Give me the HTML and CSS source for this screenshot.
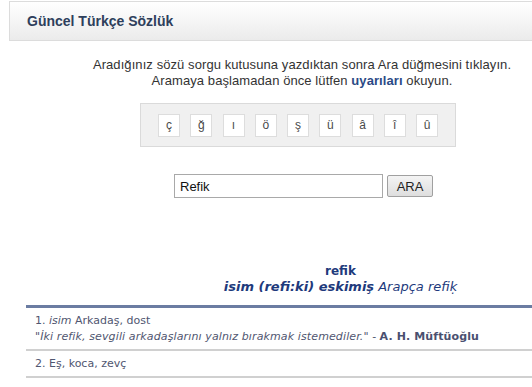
FILE: index.html
```html
<!DOCTYPE html>
<html lang="tr">
<head>
<meta charset="utf-8">
<title>Güncel Türkçe Sözlük</title>
<link rel="stylesheet" href="styles.css">
</head>
<body>
<div class="header"><h1 class="title">Güncel Türkçe Sözlük</h1></div>
<div class="main">
  <p class="intro">Aradığınız sözü sorgu kutusuna yazdıktan sonra Ara düğmesini tıklayın.<br>Aramaya başlamadan önce lütfen <a class="warn" href="#">uyarıları</a> okuyun.</p>
  <div class="chars">
    <span class="ch">ç</span><span class="ch">ğ</span><span class="ch">ı</span><span class="ch">ö</span><span class="ch">ş</span><span class="ch">ü</span><span class="ch">â</span><span class="ch">î</span><span class="ch">û</span>
  </div>
  <form class="search">
    <input class="query" type="text" value="Refik">
    <button class="go" type="button">ARA</button>
  </form>
  <div class="entry">
    <div class="word">refik</div>
    <div class="meta"><b>isim (refi:ki) eskimiş</b> Arapça refiḳ</div>
  </div>
  <div class="defs">
    <div class="def">1. <i>isim</i> Arkadaş, dost<br><i class="quote">"İki refik, sevgili arkadaşlarını yalnız bırakmak istemediler."</i> - <b class="author">A. H. Müftüoğlu</b></div>
    <div class="def">2. Eş, koca, zevç</div>
  </div>
</div>
</body>
</html>
```

FILE: styles.css
```css
html, body { margin: 0; padding: 0; background: #fff; }
body { overflow: hidden; font-family: "Liberation Sans", Arial, sans-serif; }

.header {
  margin: 1px 0 0 9px;
  height: 38px;
  border: 1px solid #dcdcdc;
  border-right: none;
  background: linear-gradient(#ffffff, #ebebeb);
  display: flex;
  align-items: center;
}
.title {
  margin: 0 0 0 17px;
  font-size: 14px;
  font-weight: bold;
  color: #2e3f5c;
}

.main { margin-left: 26px; }

.intro {
  margin: 16px 0 0;
  padding-left: 46px;
  text-align: center;
  font-size: 13px;
  line-height: 16px;
  letter-spacing: 0.08px;
  color: #333;
}
.warn { color: #2b4a86; font-weight: bold; text-decoration: none; }

.chars {
  margin: 14px 0 0 114px;
  width: 280px;
  padding: 10px 17px 9px;
  background: #f0f0f0;
  border: 1px solid #dadada;
  display: flex;
  justify-content: space-between;
}
.ch {
  width: 20px;
  height: 21px;
  border: 1px solid #dddddd;
  background: #fff;
  font-size: 12px;
  line-height: 21px;
  text-align: center;
  color: #4a4a4a;
}

.search {
  margin: 27px 0 0 148px;
  display: flex;
  align-items: center;
  gap: 4px;
}
.query {
  box-sizing: border-box;
  width: 209px;
  height: 24px;
  margin: 0;
  padding: 0 5px;
  border: 1px solid #a9a9a9;
  font-family: "Liberation Sans", Arial, sans-serif;
  font-size: 13px;
  color: #111;
}
.go {
  box-sizing: border-box;
  width: 46px;
  height: 22px;
  margin: 0;
  padding: 0;
  border: 1px solid #a0a0a0;
  border-radius: 2px;
  background: linear-gradient(#f4f4f4, #dedede);
  font-family: "Liberation Sans", Arial, sans-serif;
  font-size: 13px;
  color: #222;
}

.entry {
  margin: 65px 0 0 0;
  padding-left: 123px;
  text-align: center;
  font-family: "DejaVu Sans", Verdana, sans-serif;
  line-height: 16px;
  color: #1e3a7c;
}
.word { font-weight: bold; font-size: 12px; }
.meta { font-style: italic; font-size: 13px; }
.meta b { font-weight: bold; }

.defs {
  margin-top: 10px;
  border-top: 3px solid #6b7ca2;
  font-family: "DejaVu Sans", Verdana, sans-serif;
  font-size: 11px;
  line-height: 16px;
  color: #505670;
}
.def {
  padding: 5px 0 4px 9px;
  border-bottom: 2px solid #d0d0d0;
}
.quote, .author { letter-spacing: 0.12px; }
.author { color: #4a5070; }
```
